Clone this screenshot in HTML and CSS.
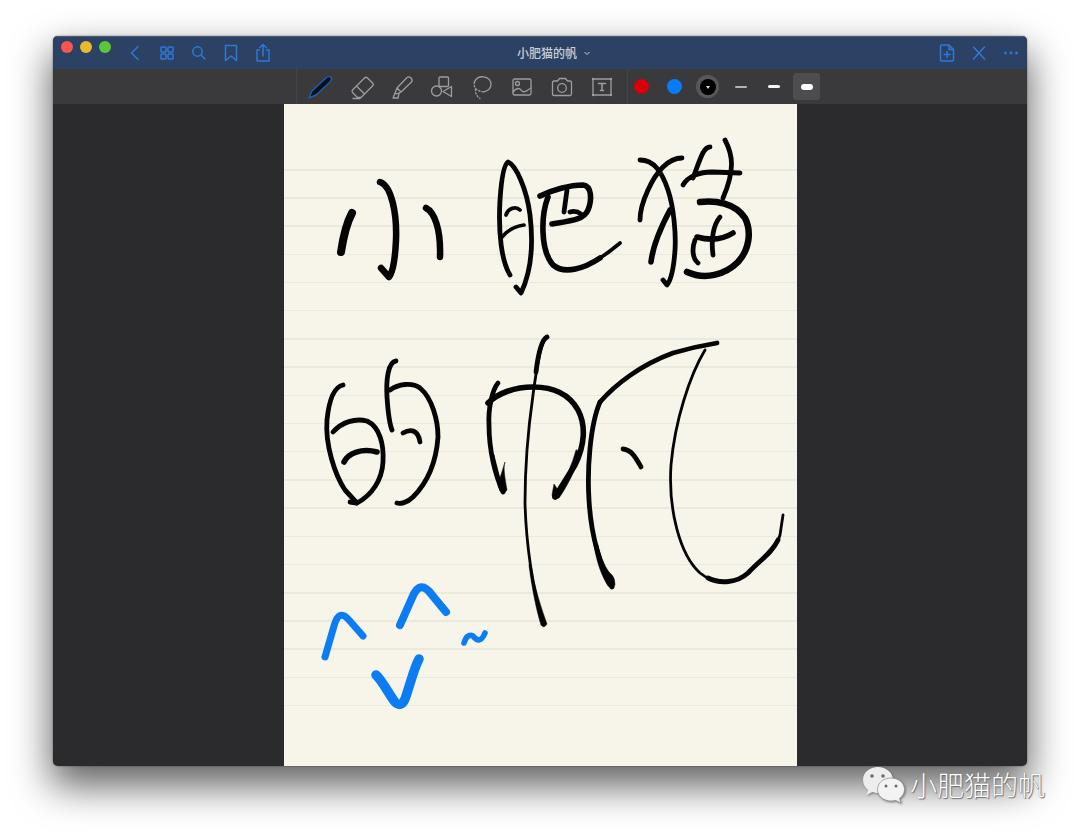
FILE: index.html
```html
<!DOCTYPE html>
<html lang="zh">
<head>
<meta charset="utf-8">
<title>小肥猫的帆</title>
<link rel="stylesheet" href="styles.css">
</head>
<body>
<main class="window">
  <header class="titlebar">
    <div class="bar-left">
      <div class="lights"><span class="light red"></span><span class="light yellow"></span><span class="light green"></span></div>
      <div class="nav-icons">
        <svg class="icon" viewBox="0 0 20 20"><path d="M13 3.500 L6.500 10 L13 16.500"/></svg>
        <svg class="icon" viewBox="0 0 20 20"><rect x="4" y="4" width="5" height="5" rx="0.800"/><rect x="11" y="4" width="5" height="5" rx="0.800"/><rect x="4" y="11" width="5" height="5" rx="0.800"/><rect x="11" y="11" width="5" height="5" rx="0.800"/></svg>
        <svg class="icon" viewBox="0 0 20 20"><circle cx="8.500" cy="8.500" r="4.700"/><path d="M12 12 L16 16"/></svg>
        <svg class="icon" viewBox="0 0 20 20"><path d="M4.500 2.500 H15.500 V17.500 L10 13 L4.500 17.500 Z"/></svg>
        <svg class="icon" viewBox="0 0 20 20"><path d="M6.500 7 H4 V18 H16 V7 H13.500"/><path d="M10 13 V1.500 M6.800 4.500 L10 1.500 L13.200 4.500"/></svg>
      </div>
    </div>
    <div class="doc-title">小肥猫的帆<svg class="caret" viewBox="0 0 8 8"><path d="M1.500 3 L4 5.500 L6.500 3"/></svg></div>
    <div class="bar-right">
      <svg class="icon" viewBox="0 0 20 20"><path d="M3.500 3 Q3.500 2 4.500 2 H12 L16.500 6.500 V17 Q16.500 18 15.500 18 H4.500 Q3.500 18 3.500 17 Z M12 2 V6.500 H16.500"/><path d="M10 8.500 V14.500 M7 11.500 H13"/></svg>
      <svg class="icon" viewBox="0 0 20 20"><path d="M4.500 4 L15.500 16 M15.500 4 L4.500 16"/></svg>
      <svg class="icon" viewBox="0 0 20 20"><circle class="dot" cx="4.500" cy="10" r="1.400"/><circle class="dot" cx="10" cy="10" r="1.400"/><circle class="dot" cx="15.500" cy="10" r="1.400"/></svg>
    </div>
  </header>

  <div class="toolbar">
    <div class="tools">
      <svg class="tool" viewBox="2 0 28 28"><path class="pen-edge" d="M3 25 L6 18 L20 5 Q23 2.500 25 4.500 Q26.500 6.500 24 9 L10 22 Z"/><path class="pen-tip" d="M4 26 H13"/></svg>
      <svg class="tool" viewBox="0 0 28 28"><path d="M4.500 17 L16.500 5 Q18 3.500 19.500 5 L24.500 10 Q26 11.500 24.500 13 L13 24.500 H9.500 L4.500 19.500 Q3.500 18 4.500 17 Z M8.500 13 L16.500 21"/><path d="M5 25.500 H12"/></svg>
      <svg class="tool" viewBox="0 0 28 28"><path d="M9 15 L19 4.500 Q21 3 23 5 Q25 7 23.500 9 L13 19 Z M9 15 L7 20 L8.500 21 L13 19 M7 20 L5 25 H10 L11 20.500"/></svg>
      <svg class="tool" viewBox="0 0 28 28"><rect x="11" y="4" width="9.500" height="9.500" rx="1"/><circle cx="8.500" cy="18" r="5"/><path d="M23.500 13.500 V23.500 L15 18.500 Z"/></svg>
      <svg class="tool" viewBox="0 0 28 28"><path d="M6.500 9 C8 5 12 3.500 15.500 3.800 C20 4.200 23.500 7.500 23 12 C22.500 15.500 19.500 18 16 18.800"/><path class="dashed" d="M6.500 9 C5 14 8.500 18.500 16 18.800 M7.500 16 Q7 22 12 25.500"/></svg>
      <svg class="tool" viewBox="0 0 28 28"><rect x="5" y="6" width="18" height="16" rx="1.500"/><circle cx="9.500" cy="10.500" r="2"/><path d="M5 19 C9 14 12 15 14 18 C17 21 20 16 23 15"/></svg>
      <svg class="tool" viewBox="0 0 28 28"><path d="M6 8 H9.500 L11.500 5.500 H17.500 L19.500 8 H22 Q23.500 8 23.500 9.500 V21 Q23.500 22.500 22 22.500 H6 Q4.500 22.500 4.500 21 V9.500 Q4.500 8 6 8 Z"/><circle cx="14" cy="15" r="4.300"/></svg>
      <svg class="tool" viewBox="0 0 28 28"><rect x="5" y="6" width="18" height="16"/><path class="t-mark" d="M10.500 10.500 H17.500 M14 10.500 V17.500 M12.500 17.500 H15.500"/><circle class="dot-grey" cx="5" cy="6" r="1.200"/><circle class="dot-grey" cx="23" cy="6" r="1.200"/><circle class="dot-grey" cx="5" cy="22" r="1.200"/><circle class="dot-grey" cx="23" cy="22" r="1.200"/></svg>
    </div>
    <div class="swatches">
      <span class="slot"><span class="swatch swatch-red"></span></span>
      <span class="slot"><span class="swatch swatch-blue"></span></span>
      <span class="slot"><span class="swatch-ring"><span class="swatch-black"></span></span></span>
      <span class="slot"><span class="weight weight-thin"></span></span>
      <span class="slot"><span class="weight weight-mid"></span></span>
      <span class="slot slot-active"><span class="weight weight-thick"></span></span>
    </div>
  </div>

  <div class="workspace">
    <section class="paper">
      <div class="rules"></div>
      <svg class="ink" viewBox="284 104 513 662">
        <g class="black">
          <!-- 小 -->
          <path class="w7" d="M352 213 Q345 226 341 252"/>
          <path class="w5" d="M380 182 C392 186 397 215 396 240 C395 262 393 272 389 277 L381 268"/>
          <path class="w5" d="M426 208 C434 212 441 228 440 257"/>
          <!-- 肥 -->
          <path class="w3" d="M510 275 C502 262 498 235 500 200 C501 185 503 165 508 162 C516 165 527 190 530 215 C533 240 532 270 521 293 L516 287"/>
          <path class="w2" d="M506 215 C508 208 516 206 520 210"/>
          <path class="w2" d="M502 237 C508 230 515 226 524 225"/>
          <path class="w4" d="M540 196 C552 190 570 185 583 185 C592 186 592 200 588 210 C584 220 570 221 552 224"/>
          <path class="w3" d="M567 190 L564 212 M570 212 Q576 210 581 214"/>
          <path class="w4" d="M548 197 C541 215 540 250 553 265 C565 275 585 268 600 258"/>
          <path class="w2" d="M600 258 C608 253 615 247 620 243"/>
          <!-- 猫 -->
          <path class="w3" d="M640 160 C654 160 662 172 668 190 C674 208 676 235 675 250 C674 265 671 280 667 285 L663 280"/>
          <path class="w3" d="M682 158 C668 158 656 172 648 190 C642 203 640 212 640 220"/>
          <path class="w4" d="M670 210 C662 225 653 245 651 262"/>
          <path class="w3" d="M683 185 C688 176 700 172 712 172 L740 173"/>
          <path class="w3" d="M710 147 C703 147 700 160 693 178"/>
          <path class="w3" d="M725 140 C733 155 735 170 723 198"/>
          <path class="w5" d="M700 202 C715 200 735 203 745 218 C752 232 749 250 738 262 C725 275 705 280 687 272"/>
          <path class="w4" d="M697 237 C708 240 722 240 733 233"/>
          <path class="w3" d="M720 217 C713 225 711 240 713 255"/>
          <path class="w3" d="M695 240 C692 248 692 258 698 263"/>
          <!-- 的 -->
          <path class="w3" d="M343 385 C334 387 329 400 327 420 C325 445 335 475 345 490 L357 503"/>
          <path class="w3" d="M333 432 C342 422 355 418 367 421 C380 427 384 445 383 462 C382 480 372 495 357 503 L350 502"/>
          <path class="w4" d="M344 462 C348 453 362 448 377 452"/>
          <path class="w3" d="M396 361 C388 362 386 380 387 397 C388 412 390 425 392 430"/>
          <path class="w3" d="M390 390 C398 384 412 382 420 388 C432 398 438 420 438 437 C436 465 425 485 413 497 C407 503 400 504 397 503"/>
          <path class="w3" d="M403 433 C410 429 418 429 420 442"/>
          <!-- 帆 -->
          <path class="w1" d="M547 337 C541 340 537 365 533 395 C528 430 525 470 525 503 C526 540 532 590 544 625"/>
          <path class="w3" d="M547 337 C541 340 538 355 536 372"/>
          <path class="blot" d="M529 565 C532 590 537 612 541 625 Q544 629 547 624 C542 610 535 590 531 565 Z"/>
          <path class="w3" d="M498 383 C492 390 488 410 489 425 C489 450 495 475 503 492"/>
          <path class="blot" d="M494 455 C496 470 497 485 500 491 Q504 495 507 490 C505 478 503 468 505 462 L500 478 Z"/>
          <path class="w4" d="M488 403 C498 393 515 387 533 387 C550 387 568 392 578 410 C586 425 585 445 575 465 L555 497"/>
          <path class="blot" d="M581 452 C576 470 566 488 559 498 Q553 501 552 495 L554 484 L558 490 C566 478 572 465 576 450 Z"/>
          <path class="w3" d="M600 402 C590 425 587 470 589 500 C591 535 600 565 612 587"/>
          <path class="blot" d="M594 545 C597 565 603 578 608 586 Q613 590 615 585 Q615 578 612 575 L609 572 C604 565 600 555 598 545 Z"/>
          <path class="w3" d="M600 402 C615 385 640 365 673 353 C690 348 705 345 717 343"/>
          <path class="w1" d="M705 350 C690 375 675 420 671 465 C668 510 680 555 700 573 C715 585 735 585 748 573 C760 560 775 552 780 535 L783 515"/>
          <path class="w3" d="M708 578 C720 584 737 583 748 573 C760 560 772 553 778 540"/>
          <path class="w3" d="M623 449 C632 450 636 458 641 467"/>
        </g>
        <g class="blue">
          <path class="w6" d="M325 657 L334 626 Q339 608 349 620 L363 636"/>
          <path class="w7" d="M400 625 L412 598 Q420 578 432 595 L446 612"/>
          <path class="w8" d="M376 675 C382 680 390 696 395 702 Q401 708 405 699 C410 685 414 668 419 659"/>
          <path class="w4" d="M464 643 Q467 633 473 636 Q480 645 485 633"/>
        </g>
      </svg>
    </section>
  </div>
</main>

<aside class="watermark">
  <svg class="wechat" viewBox="0 0 44 38">
    <path class="bubble-back" d="M16 1 C7.500 1 1 6.500 1 14 C1 18 3 21.500 6 24 L4.500 29 L10.500 26 C12 26.500 14 27 16 27 C24 27 31 21 31 14 C31 6.500 24 1 16 1 Z"/>
    <circle class="eye" cx="10" cy="10" r="1.800"/>
    <circle class="eye" cx="21" cy="10" r="1.800"/>
    <path class="bubble-front" d="M29 12 C21.500 12 15.500 17 15.500 23.500 C15.500 30 21.500 35 29 35 C30.500 35 32 34.800 33.500 34.300 L39 37 L37.500 32.500 C40.500 30.300 42.500 27 42.500 23.500 C42.500 17 36.500 12 29 12 Z"/>
    <circle class="eye" cx="24" cy="20" r="1.500"/>
    <circle class="eye" cx="34" cy="20" r="1.500"/>
  </svg>
  <span class="mark-text">小肥猫的帆</span>
</aside>
</body>
</html>
```
FILE: styles.css
```css
* { box-sizing: border-box; }

html, body { height: 100%; }

body {
  margin: 0;
  padding: 36px 53px 0;
  background: #ffffff;
  font-family: "Noto Sans CJK SC", "Noto Sans", sans-serif;
  overflow: hidden;
}

.window {
  display: flex;
  flex-direction: column;
  width: 974px;
  height: 730px;
  border-radius: 5px;
  overflow: hidden;
  background: #2b2b2d;
  box-shadow: 0 18px 38px 2px rgba(0, 0, 0, 0.62), 0 0 2px rgba(0, 0, 0, 0.5);
}

/* title bar */
.titlebar {
  display: grid;
  grid-template-columns: 1fr auto 1fr;
  align-items: center;
  height: 33px;
  flex: none;
  background: #2c4264;
  border-top: 1px solid #4d5a70;
}

.bar-left { display: flex; align-items: center; align-self: stretch; }

.lights {
  display: flex;
  gap: 7px;
  align-self: flex-start;
  margin: 4px 0 0 8px;
}

.light { width: 12px; height: 12px; border-radius: 50%; }
.red { background: #fb5550; }
.yellow { background: #e8b92c; }
.green { background: #5cc636; }

.nav-icons {
  display: flex;
  gap: 12px;
  margin-left: 14px;
}

.icon {
  width: 20px;
  height: 20px;
  fill: none;
  stroke: #2f78d6;
  stroke-width: 1.500;
  stroke-linecap: round;
  stroke-linejoin: round;
}

.icon .dot { fill: #2f78d6; stroke: none; }

.doc-title {
  display: flex;
  align-items: center;
  margin-left: 28px;
  font-size: 12px;
  line-height: 16px;
  font-weight: 500;
  color: #c9ced6;
}

.caret {
  width: 8px;
  height: 8px;
  margin-left: 6px;
  fill: none;
  stroke: #c9ced6;
  stroke-width: 1;
}

.bar-right {
  display: flex;
  justify-content: flex-end;
  gap: 12px;
  padding-right: 6px;
}

/* tool bar */
.toolbar {
  display: flex;
  align-items: center;
  flex: none;
  height: 35px;
  padding-left: 243px;
  background: #3a3a3c;
}

.tools {
  display: flex;
  gap: 12px;
  height: 100%;
  align-items: center;
  padding: 0 11px;
  border-left: 1px solid #444446;
  border-right: 1px solid #444446;
}

.tool {
  width: 28px;
  height: 28px;
  fill: none;
  stroke: #9d9d9f;
  stroke-width: 1.300;
  stroke-linejoin: round;
  stroke-linecap: round;
  flex: none;
}

.tool .pen-edge { fill: #0b0f18; stroke: #1c5fb4; stroke-width: 1.400; }
.tool .pen-tip { stroke: #5a2a22; stroke-width: 1; }
.tool .dashed { stroke-dasharray: 1.500 2; }
.tool .t-mark { stroke-width: 1.600; }
.tool .dot-grey { fill: #9d9d9f; stroke: none; }

.swatches {
  display: flex;
  align-items: center;
  gap: 6px;
}

.slot {
  display: flex;
  align-items: center;
  justify-content: center;
  width: 27px;
  height: 27px;
  border-radius: 3px;
}

.slot-active { background: #4d4d4f; }

.swatch { width: 15px; height: 15px; border-radius: 50%; }
.swatch-red { background: #d70007; }
.swatch-blue { background: #0a7bf6; }

.swatch-ring {
  display: flex;
  align-items: center;
  justify-content: center;
  width: 23px;
  height: 23px;
  border-radius: 50%;
  background: #58585a;
}

.swatch-black {
  position: relative;
  width: 16px;
  height: 16px;
  border-radius: 50%;
  background: #000;
}

.swatch-black::after {
  content: "";
  position: absolute;
  left: 6px;
  top: 7px;
  border: 2px solid transparent;
  border-top: 3px solid #ddd;
  border-bottom: 0;
}

.weight { width: 12px; border-radius: 3px; }
.weight-thin { height: 2px; background: #b4b4b4; }
.weight-mid { height: 3.500px; background: #f4f4f4; }
.weight-thick { height: 6px; background: #fdfdfd; }

/* page area */
.workspace {
  flex: 1;
  display: flex;
  justify-content: center;
  min-height: 0;
  padding-left: 1px;
}

.paper {
  position: relative;
  width: 513px;
  background: #f7f4e9;
  padding-top: 65px;
}

.rules {
  height: 538px;
  background-image: repeating-linear-gradient(#ebe8dc 0, #ebe8dc 1.500px, transparent 1.500px, transparent 28.200px);
}

.ink {
  position: absolute;
  inset: 0;
  width: 100%;
  height: 100%;
  filter: blur(0.4px);
}

.ink path { fill: none; stroke-linecap: round; stroke-linejoin: round; }
.black path { stroke: #050505; }
.blue path { stroke: #0c7cf3; }
.ink path.blot { fill: #050505; stroke-width: 0.500; }
.w1 { stroke-width: 2.800; }
.w2 { stroke-width: 3.700; }
.w3 { stroke-width: 4.800; }
.w4 { stroke-width: 5.600; }
.w5 { stroke-width: 6.500; }
.w6 { stroke-width: 7; }
.w7 { stroke-width: 8; }
.w8 { stroke-width: 9.500; }

/* watermark over the corner of the window */
.watermark {
  position: absolute;
  left: 862px;
  top: 766px;
  display: flex;
  align-items: center;
  gap: 4px;
}

.wechat { width: 44px; height: 38px; filter: drop-shadow(1px 1px 1px rgba(60, 60, 60, 0.6)); }
.bubble-back { fill: #ededed; }
.bubble-front { fill: #f3f3f3; stroke: #8a8a8a; stroke-width: 0.700; }
.eye { fill: #6b6b6b; }

.mark-text {
  font-size: 27px;
  line-height: 38px;
  font-weight: 300;
  color: #ffffff;
  text-shadow: 1px 1px 1px #6e6e6e, 0 0 1px #777;
}
```
